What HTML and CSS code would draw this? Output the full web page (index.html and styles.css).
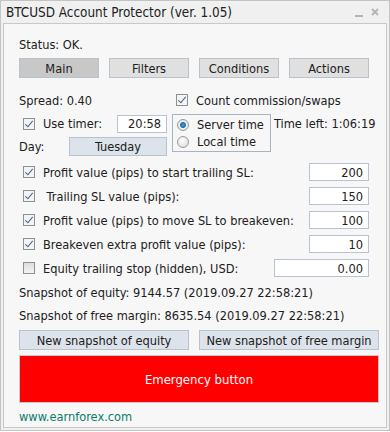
FILE: index.html
```html
<!DOCTYPE html>
<html lang="en">
<head>
    <meta charset="UTF-8">
    <title>BTCUSD Account Protector</title>
    <link rel="stylesheet" href="styles.css">
</head>
<body>
    <div class="window">
        <div class="titlebar">
            <span class="title">BTCUSD Account Protector (ver. 1.05)</span>
            <span class="controls">
                <svg width="8" height="2" viewBox="0 0 8 2"><rect width="8" height="2" fill="#b4b4b4"/></svg>
                <svg width="8" height="8" viewBox="0 0 8 8"><path d="M1 1L7 7M7 1L1 7" stroke="#b4b4b4" stroke-width="2"/></svg>
            </span>
        </div>

        <div class="panel">
            <div class="row status">Status: OK.</div>

            <div class="tabs">
                <button class="tab active">Main</button>
                <button class="tab">Filters</button>
                <button class="tab">Conditions</button>
                <button class="tab">Actions</button>
            </div>

            <div class="row spread">
                <span class="spread-text">Spread: 0.40</span>
                <span class="check on"></span>
                <span class="check-label">Count commission/swaps</span>
            </div>

            <div class="timer-block">
                <div class="timer-left">
                    <div class="timer-row">
                        <span class="check on"></span>
                        <span class="check-label">Use timer:</span>
                        <span class="field time-field">20:58</span>
                    </div>
                    <div class="day-row">
                        <span class="day-label">Day:</span>
                        <button class="day-btn">Tuesday</button>
                    </div>
                </div>
                <div class="radio-box">
                    <div class="radio-row"><span class="radio on"></span>Server time</div>
                    <div class="radio-row"><span class="radio"></span>Local time</div>
                </div>
                <div class="time-left">Time left: 1:06:19</div>
            </div>

            <div class="option">
                <span class="check on"></span>
                <span class="check-label">Profit value (pips) to start trailing SL:</span>
                <span class="field num">200</span>
            </div>
            <div class="option">
                <span class="check on"></span>
                <span class="check-label">&nbsp;Trailing SL value (pips):</span>
                <span class="field num">150</span>
            </div>
            <div class="option">
                <span class="check on"></span>
                <span class="check-label">Profit value (pips) to move SL to breakeven:</span>
                <span class="field num">100</span>
            </div>
            <div class="option">
                <span class="check on"></span>
                <span class="check-label">Breakeven extra profit value (pips):</span>
                <span class="field num">10</span>
            </div>
            <div class="option">
                <span class="check"></span>
                <span class="check-label">Equity trailing stop (hidden), USD:</span>
                <span class="field num wide">0.00</span>
            </div>

            <div class="row snap first">Snapshot of equity: 9144.57 (2019.09.27 22:58:21)</div>
            <div class="row snap">Snapshot of free margin: 8635.54 (2019.09.27 22:58:21)</div>

            <div class="snap-buttons">
                <button class="snap-btn left">New snapshot of equity</button>
                <button class="snap-btn right">New snapshot of free margin</button>
            </div>

            <button class="emergency">Emergency button</button>

            <div class="row site">www.earnforex.com</div>
        </div>
    </div>
</body>
</html>
```

FILE: styles.css
```css
* {
    box-sizing: border-box;
}

body {
    margin: 0;
    background-color: #ffffff;
    font-family: "DejaVu Sans Condensed", "DejaVu Sans", sans-serif;
    font-size: 12.7px;
    color: #202020;
}

button {
    font-family: inherit;
    font-size: 12.7px;
    color: #202020;
    padding: 0;
    cursor: pointer;
}

.window {
    width: 390px;
    height: 431px;
    border: 1px solid #c4c4c4;
    background-color: #f0f0f0;
}

.titlebar {
    height: 22px;
    display: flex;
    align-items: center;
    justify-content: space-between;
    padding: 0 10px 0 5px;
}

.title {
    font-size: 13.4px;
}

.controls {
    display: flex;
    align-items: center;
    gap: 8px;
}

.controls svg:first-child {
    margin-top: 8px;
}

.panel {
    margin: 0 2px;
    height: 405px;
    border: 1px solid #c8c8c8;
    background-color: #f7f7f7;
    padding: 11px 0 0 15px;
}

.row {
    height: 18px;
    display: flex;
    align-items: center;
}

.tabs {
    display: flex;
    gap: 10px;
    margin-top: 5px;
}

.tab {
    width: 80px;
    height: 20px;
    border: 1px solid #b9c3ce;
    background-color: #e0e0e0;
}

.tab.active {
    background-color: #c8c8c8;
}

.spread {
    margin-top: 13px;
}

.spread-text {
    width: 153px;
}

.check {
    width: 12px;
    height: 12px;
    border: 1px solid #8e8f8f;
    background: linear-gradient(#dcdcdc, #f4f4f4);
    position: relative;
    flex: none;
    margin-left: 4px;
}

.check.on {
    background: #f4f4f4;
}

.check.on::after {
    content: "";
    position: absolute;
    left: 3px;
    top: 0px;
    width: 3px;
    height: 7px;
    border: solid #4d6185;
    border-width: 0 1.5px 1.5px 0;
    transform: rotate(40deg);
}

.check-label {
    margin-left: 8px;
    white-space: nowrap;
}

.timer-block {
    display: flex;
    margin-top: 4px;
}

.timer-left {
    width: 148px;
    flex: none;
}

.timer-row {
    height: 21px;
    display: flex;
    align-items: center;
}

.field {
    height: 18px;
    border: 1px solid #b8c3cf;
    background-color: #ffffff;
    display: flex;
    align-items: center;
    justify-content: flex-end;
    padding-right: 5px;
    flex: none;
}

.time-field {
    width: 50px;
    margin-left: auto;
}

.day-row {
    display: flex;
    align-items: center;
    margin-top: 3px;
}

.day-label {
    width: 50px;
}

.day-btn {
    width: 98px;
    height: 19px;
    border: 1px solid #b9c3ce;
    background-color: #dde3ea;
}

.radio-box {
    width: 99px;
    height: 38px;
    flex: none;
    margin: 1px 0 0 5px;
    border: 1px solid #a8b4c2;
    padding: 1px 0 0 4px;
}

.radio-row {
    height: 17px;
    display: flex;
    align-items: center;
    gap: 8px;
    white-space: nowrap;
}

.radio {
    width: 12px;
    height: 12px;
    border-radius: 50%;
    border: 1px solid #9a9a9a;
    background: radial-gradient(circle at 40% 35%, #ffffff, #d6d6d6);
    flex: none;
}

.radio.on {
    background: radial-gradient(circle, #3fa7e0 0, #1f6fa8 2.5px, #f2f2f2 3.5px, #dcdcdc 6px);
}

.time-left {
    margin: 1px 0 0 3px;
    height: 18px;
    display: flex;
    align-items: center;
    white-space: nowrap;
}

.option {
    width: 350px;
    height: 22px;
    display: flex;
    align-items: center;
    margin-top: 2px;
}

.timer-block + .option {
    margin-top: 5px;
}

.option .field {
    margin-left: auto;
}

.num {
    width: 60px;
}

.num.wide {
    width: 95px;
}

.snap.first {
    margin-top: 4px;
}

.snap {
    margin-top: 5px;
    white-space: nowrap;
}

.snap-buttons {
    display: flex;
    gap: 10px;
    margin-top: 6px;
}

.snap-btn {
    height: 20px;
    border: 1px solid #b9c3ce;
    background-color: #dde3ea;
    white-space: nowrap;
}

.snap-btn.left {
    width: 170px;
}

.snap-btn.right {
    width: 180px;
}

.emergency {
    display: block;
    width: 360px;
    height: 48px;
    margin-top: 5px;
    border: 1px solid #c8c8c8;
    background-color: #ff0000;
    color: #ffffff;
    font-size: 13px;
}

.site {
    margin-top: 4px;
    color: #0a7d6c;
}
```
